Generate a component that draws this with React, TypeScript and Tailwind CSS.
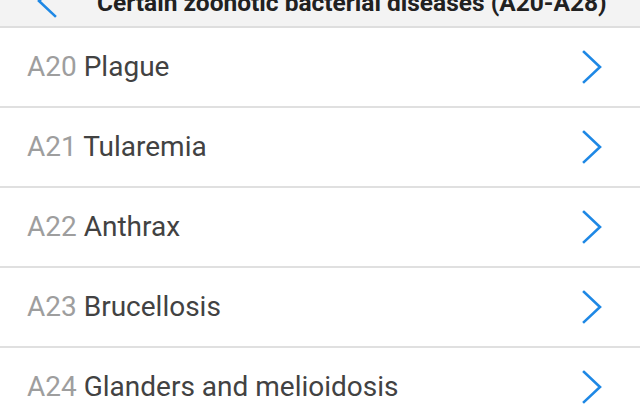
import React from "react";

const items = [
  ["A20", "Plague"],
  ["A21", "Tularemia"],
  ["A22", "Anthrax"],
  ["A23", "Brucellosis"],
  ["A24", "Glanders and melioidosis"],
  ["A25", "Rat-bite fevers"],
];

function Chevron() {
  return (
    <svg width="22" height="34" viewBox="0 0 22 34" fill="none">
      <path d="M3 2 L19 17 L3 32" stroke="#1e88e5" strokeWidth="2.6" strokeLinecap="square" />
    </svg>
  );
}

export default function App() {
  return (
    <div className="w-[640px] h-[420px] overflow-hidden bg-white" style={{ fontFamily: "Roboto, 'Liberation Sans', sans-serif" }}>
      <div className="h-[56px] -mt-[28px] bg-[#f3f3f3] border-b-2 border-[#dedede] flex items-center">
        <div className="w-[95px] flex justify-center pr-[2px] pt-[4px]">
          <svg width="22" height="34" viewBox="0 0 22 34" fill="none">
            <path d="M19 2 L3 17 L19 32" stroke="#1e88e5" strokeWidth="2.6" strokeLinecap="square" />
          </svg>
        </div>
        <div className="pt-[8px] pl-[2px] text-[24.5px] font-bold text-[#212121] whitespace-nowrap">Certain zoonotic bacterial diseases (A20-A28)</div>
      </div>
      {items.map(([code, name]) => (
        <div key={code} className="h-[80px] border-b-2 border-[#e0e0e0] flex items-center pl-[27px] pr-[37px]">
          <div className="flex-1 text-[28px] whitespace-nowrap">
            <span className="text-[#9e9e9e]">{code}</span>{" "}
            <span className="text-[#424242]">{name}</span>
          </div>
          <Chevron />
        </div>
      ))}
    </div>
  );
}
